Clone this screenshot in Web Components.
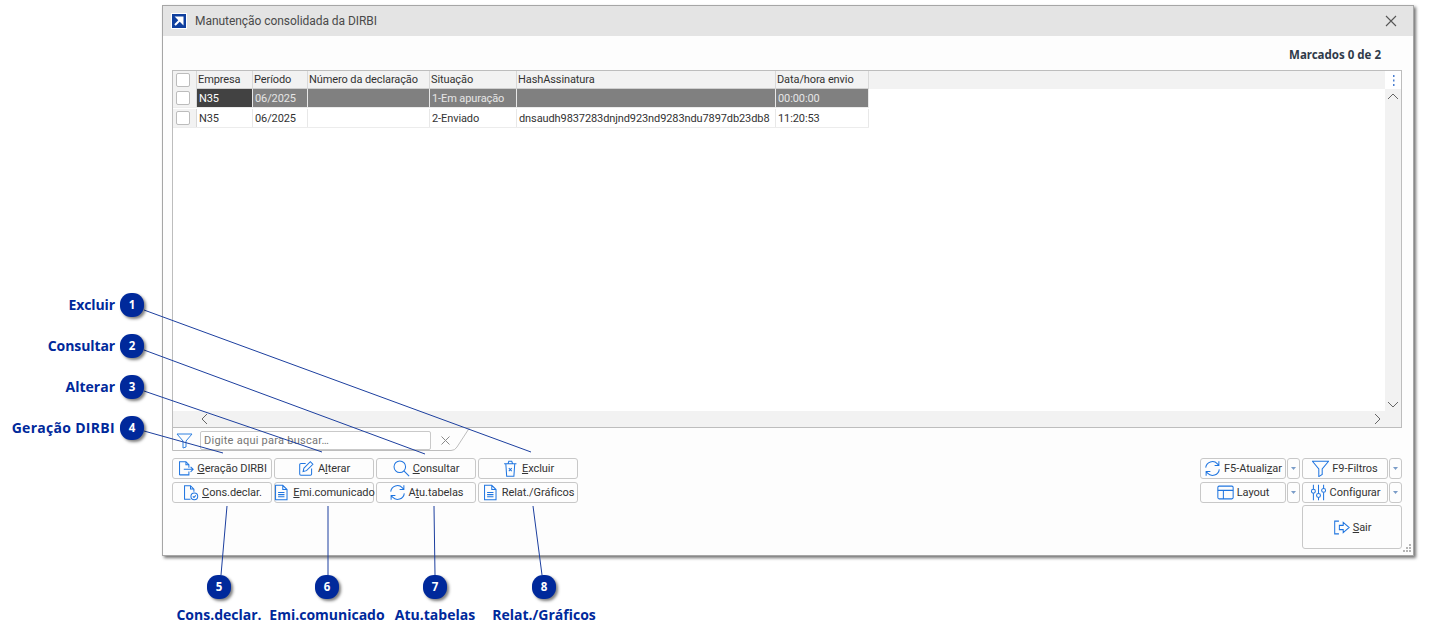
<!DOCTYPE html>
<html lang="pt-BR">
<head>
<meta charset="utf-8">
<title>Manutenção consolidada da DIRBI</title>
<style>
  html,body{margin:0;padding:0;background:#fff;width:1437px;height:641px;overflow:hidden;font-family:Roboto,"Noto Sans",sans-serif}
</style>
</head>
<body>
<help-page>
  <app-window title="Manutenção consolidada da DIRBI">
    <data-grid></data-grid>
    <div slot="left" style="display:contents">
      <tool-button icon="export"><u>G</u>eração DIRBI</tool-button>
      <tool-button icon="edit">A<u>l</u>terar</tool-button>
      <tool-button icon="search"><u>C</u>onsultar</tool-button>
      <tool-button icon="trash"><u>E</u>xcluir</tool-button>
      <tool-button icon="doccheck"><u>C</u>ons.declar.</tool-button>
      <tool-button icon="doc"><u>E</u>mi.comunicado</tool-button>
      <tool-button icon="refresh">A<u>t</u>u.tabelas</tool-button>
      <tool-button icon="doc">Relat./Gráficos</tool-button>
    </div>
    <div slot="right" style="display:contents">
      <tool-button icon="refresh" drop>F5-Atuali<u>z</u>ar</tool-button>
      <tool-button icon="funnel" drop>F9-Filtros</tool-button>
      <tool-button icon="layout" drop>Layout</tool-button>
      <tool-button icon="sliders" drop>Configurar</tool-button>
      <tool-button icon="exit" style="grid-column:2;height:44px;margin-top:-1px"><u>S</u>air</tool-button>
    </div>
  </app-window>
  <call-outs></call-outs>
</help-page>

<script>
const ICONS = {
  export:'<path d="M3 17.500V2h7.500L14 5.500V9M10.500 2v3.500H14M3 17.500h11v-4"/><path d="M8 11h11M16 8l3 3-3 3"/>',
  edit:'<path d="M9 4H3.500A1.500 1.500 0 0 0 2 5.500V16.500A1.500 1.500 0 0 0 3.500 18H14.500A1.500 1.500 0 0 0 16 16.500V10"/><path d="M7 9.500 14.500 2l3 3L10 12.500l-4 1z"/>',
  search:'<circle cx="8" cy="8" r="6.800"/><path d="M12.800 12.800 19 19"/>',
  trash:'<path d="M4.500 4.500 5.500 19h8.500l1-14.500M2.500 4.500h14.500M7 4.500 8 1.500h3.500l1 3"/><path d="M8 9.500l3.500 3.500M11.500 9.500 8 13"/>',
  doccheck:'<path d="M10 18H3V2h7l4 4v3M10 2v4h4"/><circle cx="14.500" cy="14.500" r="4"/><path d="M12.800 14.500l1.300 1.300 2.200-2.300"/>',
  doc:'<path d="M3 1.500H11.500L16.500 6.500V18.500H3zM11.500 1.500V6.500H16.500M6 10h7.500M6 12.500h7.500M6 15h7.500"/>',
  refresh:'<path d="M2 9A8 8 0 0 1 15.800 4.500L17.500 6.500M17.500 1.500V6.500H12.500M18 11A8 8 0 0 1 4.200 15.500L2.500 13.500M2.500 18.500V13.500H7.500"/>',
  funnel:'<path d="M.5 1.500h19l-7.500 9V17l-4 2.500v-9z"/>',
  layout:'<rect x="1" y="2.500" width="18" height="15" rx="1.500"/><path d="M1 7.500h18M7.500 7.500V17.500"/>',
  sliders:'<path d="M4 1v5M4 11v8M10 1v10M10 16v3M16 1v4M16 10v9"/><circle cx="4" cy="8.500" r="2.300"/><circle cx="10" cy="13.500" r="2.300"/><circle cx="16" cy="7.500" r="2.300"/>',
  exit:'<path d="M7 2.500H2V17.500H7"/><path d="M7.500 7.500H12V4l7 6-7 6v-3.500H7.500z"/>'
};

class HelpPage extends HTMLElement {
  constructor(){
    super();
    this.attachShadow({mode:'open'}).innerHTML = `<style>
      :host{display:block;position:relative;width:1437px;height:641px;padding:5px 0 0 162px;box-sizing:border-box}
    </style><slot></slot>`;
  }
}

class AppWindow extends HTMLElement {
  constructor(){
    super();
    const title = this.getAttribute('title');
    this.removeAttribute('title');
    this.attachShadow({mode:'open'}).innerHTML = `<style>
      :host{display:flex;flex-direction:column;width:1252px;height:551px;box-sizing:border-box;background:#fdfdfd;
        border:1px solid #a6a6a6;border-left-width:1.500px;box-shadow:2px 2px 3px rgba(0,0,0,.55);color:#333;font-size:11px;position:relative}
      .bar{height:30px;flex:none;background:#e4e4e4;display:flex;align-items:center;padding:0 0 0 8px;gap:8px;font-size:12px;color:#4a4a4a}
      .logo{width:16px;height:16px;flex:none}
      .bar span{flex:1;letter-spacing:-.05px}
      .close{width:14px;height:14px;margin-right:15px;flex:none}
      .count{height:34px;flex:none;display:flex;align-items:center;justify-content:flex-end;padding:3px 32px 0 0;box-sizing:border-box;font:700 11.500px "Noto Sans",sans-serif;color:#2f3a4a}
      .body{padding:0 11px 0 9px;display:flex;flex-direction:column}
      .tools{display:flex;justify-content:space-between;margin-top:6px}
      .left{display:grid;grid-template-columns:repeat(4,100px);grid-auto-rows:21px;gap:3px 2px}
      .right{display:grid;grid-template-columns:100px 100px;grid-auto-rows:21px;gap:3px 2px;justify-content:end}
      .grip{position:absolute;right:1px;bottom:2px;width:9px;height:9px}
    </style>
    <div class="bar">
      <svg class="logo" viewBox="0 0 16 16"><rect width="16" height="16" fill="#fff"/><rect x="1" y="1" width="14" height="14" fill="#0f3f9e"/><path d="M4 12 10 6M6 4.500h5.500V10z" stroke="#fff" stroke-width="2" fill="#fff"/></svg>
      <span>${title}</span>
      <svg class="close" viewBox="0 0 14 14"><path d="M2 2l10 10M12 2 2 12" stroke="#555" stroke-width="1.100"/></svg>
    </div>
    <div class="count">Marcados 0 de 2</div>
    <div class="body">
      <slot></slot>
      <div class="tools">
        <div class="left"><slot name="left"></slot></div>
        <div class="right"><slot name="right"></slot></div>
      </div>
    </div>
    <svg class="grip" viewBox="0 0 9 9" fill="#b5b5b5"><rect x="6" y="0" width="2" height="2"/><rect x="3" y="3" width="2" height="2"/><rect x="6" y="3" width="2" height="2"/><rect x="0" y="6" width="2" height="2"/><rect x="3" y="6" width="2" height="2"/><rect x="6" y="6" width="2" height="2"/></svg>`;
  }
}

class DataGrid extends HTMLElement {
  constructor(){
    super();
    const cols = [
      ['Empresa',56],['Período',55],['Número da declaração',122],['Situação',87],['HashAssinatura',259],['Data/hora envio',93]
    ];
    const rows = [
      ['N35','06/2025','','1-Em apuração','','00:00:00'],
      ['N35','06/2025','','2-Enviado','dnsaudh9837283dnjnd923nd9283ndu7897db23db8','11:20:53']
    ];
    const check = '<div class="chk"><i></i></div>';
    const head = cols.map(c=>`<div class="th" style="width:${c[1]}px">${c[0]}</div>`).join('');
    const body = rows.map((r,i)=>`<div class="row ${i===0?'sel':''}">${check}${r.map((v,j)=>`<div class="td" style="width:${cols[j][1]}px">${v}</div>`).join('')}</div>`).join('');
    this.attachShadow({mode:'open'}).innerHTML = `<style>
      :host{display:block;position:relative;height:382px;font-size:11px;color:#333}
      .box{position:absolute;inset:0 0 25px 0;border:1px solid #bdbdbd;border-bottom:none;box-sizing:border-box;display:flex;flex-direction:column;background:#fff}
      .main{flex:1;display:flex;min-height:0}
      .cells{flex:1;min-width:0;display:flex;flex-direction:column}
      .head{height:18px;background:#f2f2f2;display:flex}
      .row{height:18px;display:flex;margin-bottom:1px;width:max-content;border-bottom:1px solid #ececec}
      .chk{width:24px;flex:none;background:#f2f2f2;display:flex;align-items:center;padding-left:3px;box-sizing:border-box;border-right:1px solid #d8d8d8}
      .chk i{width:14px;height:14px;box-sizing:border-box;background:#fff;border:1px solid #bcbcbc;border-radius:2px;display:block}
      .th,.td{box-sizing:border-box;flex:none;display:flex;align-items:center;white-space:nowrap;overflow:hidden;border-right:1px solid #d9d9d9;letter-spacing:-.1px}
      .th{padding-left:1px;border-bottom:1px solid #cfcfcf}
      .td{padding-left:2px;border-right-color:#e8e8e8}
      .sel .td{background:#808080;color:#e6e6e6;border-right-color:#e8e8e8}
      .sel .td:nth-child(2){background:#424242;color:#fff}
      .fill{flex:1}
      .spare{flex:1;min-height:0}
      .vbar{width:16px;flex:none;background:#f2f2f2;display:flex;flex-direction:column;align-items:center}
      .dots{height:18px;background:#fff;width:100%;display:flex;align-items:center;justify-content:center}
      .hbar{height:16px;flex:none;background:#f2f2f2;display:flex;align-items:center;justify-content:space-between;padding:0 16px 0 24px}
      .arrow{width:16px;height:16px;flex:none;display:block}
      .vbar .end{margin-top:auto;position:relative;top:1px}
      .find{position:absolute;left:0;right:0;bottom:0;height:25px;display:flex;align-items:center;pointer-events:none;border-top:1px solid #bdbdbd;box-sizing:border-box}
      .tab{position:absolute;left:0;top:-1px;width:300px;height:25px;display:block}
      .funnel{position:relative;margin-left:4px;width:17px;height:17px}
      input{position:relative;margin-left:7px;width:231px;height:19px;box-sizing:border-box;border:1px solid #c9c9c9;border-radius:2px;background:#fff;padding:0 3px;font:11px Roboto,"Noto Sans",sans-serif;letter-spacing:.25px}
      input::placeholder{color:#757575;opacity:1}
      .clear{position:relative;margin-left:10px;width:9px;height:9px}
    </style>
    <div class="box">
      <div class="main">
        <div class="cells">
          <div class="head"><div class="chk"><i></i></div>${head}<div class="fill"></div></div>
          ${body}
          <div class="spare"></div>
        </div>
        <div class="vbar">
          <div class="dots"><svg width="3" height="11" viewBox="0 0 3 11" fill="#4a7fd0"><rect x="1" y="0" width="1.500" height="2"/><rect x="1" y="4.500" width="1.500" height="2"/><rect x="1" y="9" width="1.500" height="2"/></svg></div>
          <svg class="arrow" viewBox="0 0 16 16"><path d="M3 10l5-5 5 5" fill="none" stroke="#666"/></svg>
          <svg class="arrow end" viewBox="0 0 16 16"><path d="M3 6l5 5 5-5" fill="none" stroke="#666"/></svg>
        </div>
      </div>
      <div class="hbar">
        <svg class="arrow" viewBox="0 0 16 16"><path d="M10 3 5 8l5 5" fill="none" stroke="#666"/></svg>
        <svg class="arrow" viewBox="0 0 16 16"><path d="M6 3l5 5-5 5" fill="none" stroke="#666"/></svg>
      </div>
    </div>
    <div class="find">
      <svg class="tab" viewBox="0 0 300 25"><path d="M.5 0 V23.500 H279 Q283 23.500 285 20 L298 0" fill="none" stroke="#bdbdbd"/></svg>
      <svg class="funnel" viewBox="0 0 17 17"><path d="M1 2h15l-6 7v6l-3 1V9z" fill="none" stroke="#2f80e0"/></svg>
      <input placeholder="Digite aqui para buscar…">
      <svg class="clear" viewBox="0 0 9 9"><path d="M.5.500l8 8M8.500.500l-8 8" stroke="#8a8a8a"/></svg>
    </div>`;
  }
}

class ToolButton extends HTMLElement {
  constructor(){
    super();
    const icon = ICONS[this.getAttribute('icon')];
    const drop = this.hasAttribute('drop');
    this.attachShadow({mode:'open'}).innerHTML = `<style>
      :host{display:flex;gap:1px;height:21px;font-size:11px;color:#333}
      .btn{flex:1;min-width:0;box-sizing:border-box;border:1px solid #c8c8c8;border-radius:3px;background:#fdfdfd;display:flex;align-items:center;justify-content:center;gap:3px;white-space:nowrap;letter-spacing:-.06px}
      svg.ic{width:17px;height:17px;flex:none;fill:none;stroke:#1f75e0;stroke-width:1.200}
      .drop{width:13px;flex:none;box-sizing:border-box;border:1px solid #c8c8c8;border-radius:3px;background:#fdfdfd;display:flex;align-items:center;justify-content:center}
      .drop svg{width:5px;height:3px}
    </style>
    <div class="btn"><svg class="ic" viewBox="0 0 20 20">${icon}</svg><span><slot></slot></span></div>
    ${drop?'<div class="drop"><svg viewBox="0 0 5 3"><path d="M0 0h5L2.500 3z" fill="#7a9cc8"/></svg></div>':''}`;
  }
}

class CallOuts extends HTMLElement {
  constructor(){
    super();
    const lines = [
      [144,310,531,452],[144,350,425,454],[144,391,322,452],[144,431,223,453],
      [221,575,227,506],[328,575,328,506],[435,575,434,506],[542,575,533,506]
    ];
    const side = [['Excluir',305,-.1],['Consultar',346,-.1],['Alterar',387,0],['Geração DIRBI',428,.3]];
    const bottom = [['Cons.declar.',219],['Emi.comunicado',327],['Atu.tabelas',435],['Relat./Gráficos',544]];
    const badge = (n,x,y)=>`<div class="badge" style="left:${x-12}px;top:${y-12}px">${n}</div>`;
    let html = '';
    side.forEach((s,i)=>{
      html += badge(i+1,132,s[1]);
      html += `<div class="lbl" style="right:${1437-115}px;top:${s[1]-11}px;letter-spacing:${s[2]}px">${s[0]}</div>`;
    });
    bottom.forEach((b,i)=>{
      html += badge(i+5,b[1],587);
      html += `<div class="lbl" style="left:${b[1]-80}px;width:160px;text-align:center;top:604px">${b[0]}</div>`;
    });
    this.attachShadow({mode:'open'}).innerHTML = `<style>
      :host{position:absolute;inset:0;display:block;pointer-events:none}
      svg{position:absolute;inset:0}
      .badge{position:absolute;width:24px;height:24px;border-radius:11px;background:#00299b;color:#fff;font:700 11.500px/24px "Open Sans","Noto Sans",sans-serif;text-align:center;box-shadow:2px 2px 3px rgba(0,0,0,.5)}
      .lbl{position:absolute;font:700 14px/22px "Open Sans","Noto Sans",sans-serif;color:#00299b;white-space:nowrap}
    </style>
    <svg width="1437" height="641">${lines.map(l=>`<line x1="${l[0]}" y1="${l[1]}" x2="${l[2]}" y2="${l[3]}" stroke="#1c3f9f" stroke-width="1"/>`).join('')}</svg>
    ${html}`;
  }
}

customElements.define('help-page', HelpPage);
customElements.define('app-window', AppWindow);
customElements.define('data-grid', DataGrid);
customElements.define('tool-button', ToolButton);
customElements.define('call-outs', CallOuts);
</script>
</body>
</html>
